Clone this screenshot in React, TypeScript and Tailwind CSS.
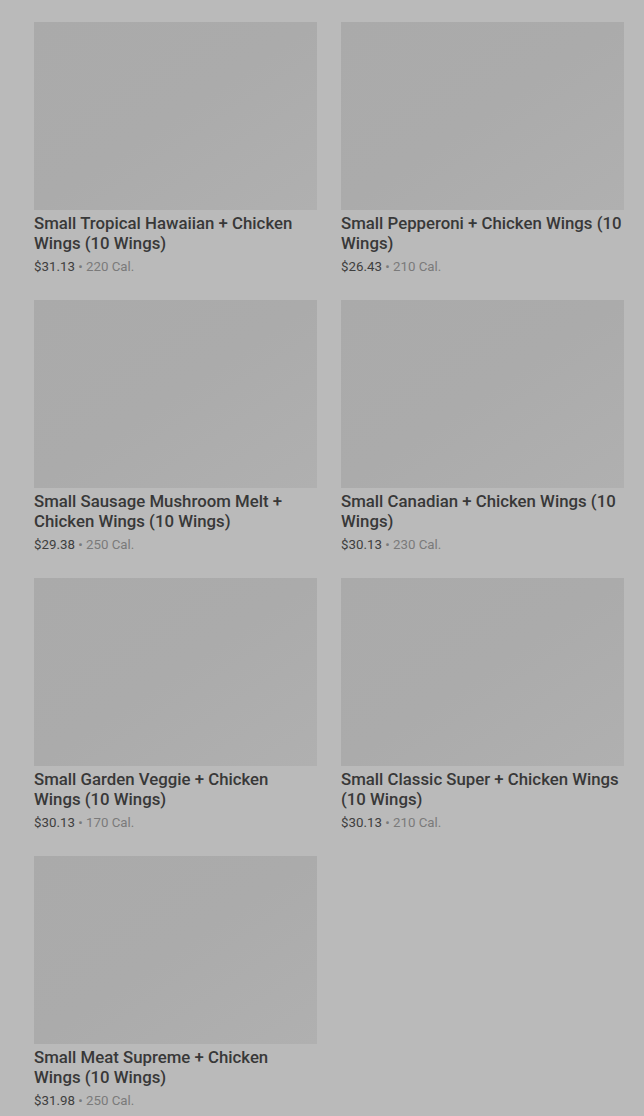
import React from "react";

type Item = { name: string; price: string; cal: string };

const items: Item[] = [
  { name: "Small Tropical Hawaiian + Chicken Wings (10 Wings)", price: "$31.13", cal: "220 Cal." },
  { name: "Small Pepperoni + Chicken Wings (10 Wings)", price: "$26.43", cal: "210 Cal." },
  { name: "Small Sausage Mushroom Melt + Chicken Wings (10 Wings)", price: "$29.38", cal: "250 Cal." },
  { name: "Small Canadian + Chicken Wings (10 Wings)", price: "$30.13", cal: "230 Cal." },
  { name: "Small Garden Veggie + Chicken Wings (10 Wings)", price: "$30.13", cal: "170 Cal." },
  { name: "Small Classic Super + Chicken Wings (10 Wings)", price: "$30.13", cal: "210 Cal." },
  { name: "Small Meat Supreme + Chicken Wings (10 Wings)", price: "$31.98", cal: "250 Cal." },
];

function Card({ item }: { item: Item }) {
  return (
    <div className="flex flex-col">
      <div className="h-[188px] w-full bg-gradient-to-br from-[#aaaaaa] via-[#ababab] to-[#b0b0b0]" />
      <div className="mt-[3px] text-[16.8px] leading-[20px] font-medium text-[#383838]">{item.name}</div>
      <div className="mt-[5px] text-[13.3px] leading-[18px]">
        <span className="text-[#3e3e3e]">{item.price}</span>
        <span className="text-[#7a7a7a]"> • {item.cal}</span>
      </div>
    </div>
  );
}

export default function App() {
  return (
    <div
      className="min-h-screen bg-[#bababa] pl-[34px] pr-[20px] pt-[22px] pb-6"
      style={{ fontFamily: "Roboto, 'Noto Sans', sans-serif" }}
    >
      <div className="grid grid-cols-2 gap-x-[24px] gap-y-[24px]">
        {items.map((item, i) => (
          <Card key={i} item={item} />
        ))}
      </div>
    </div>
  );
}
